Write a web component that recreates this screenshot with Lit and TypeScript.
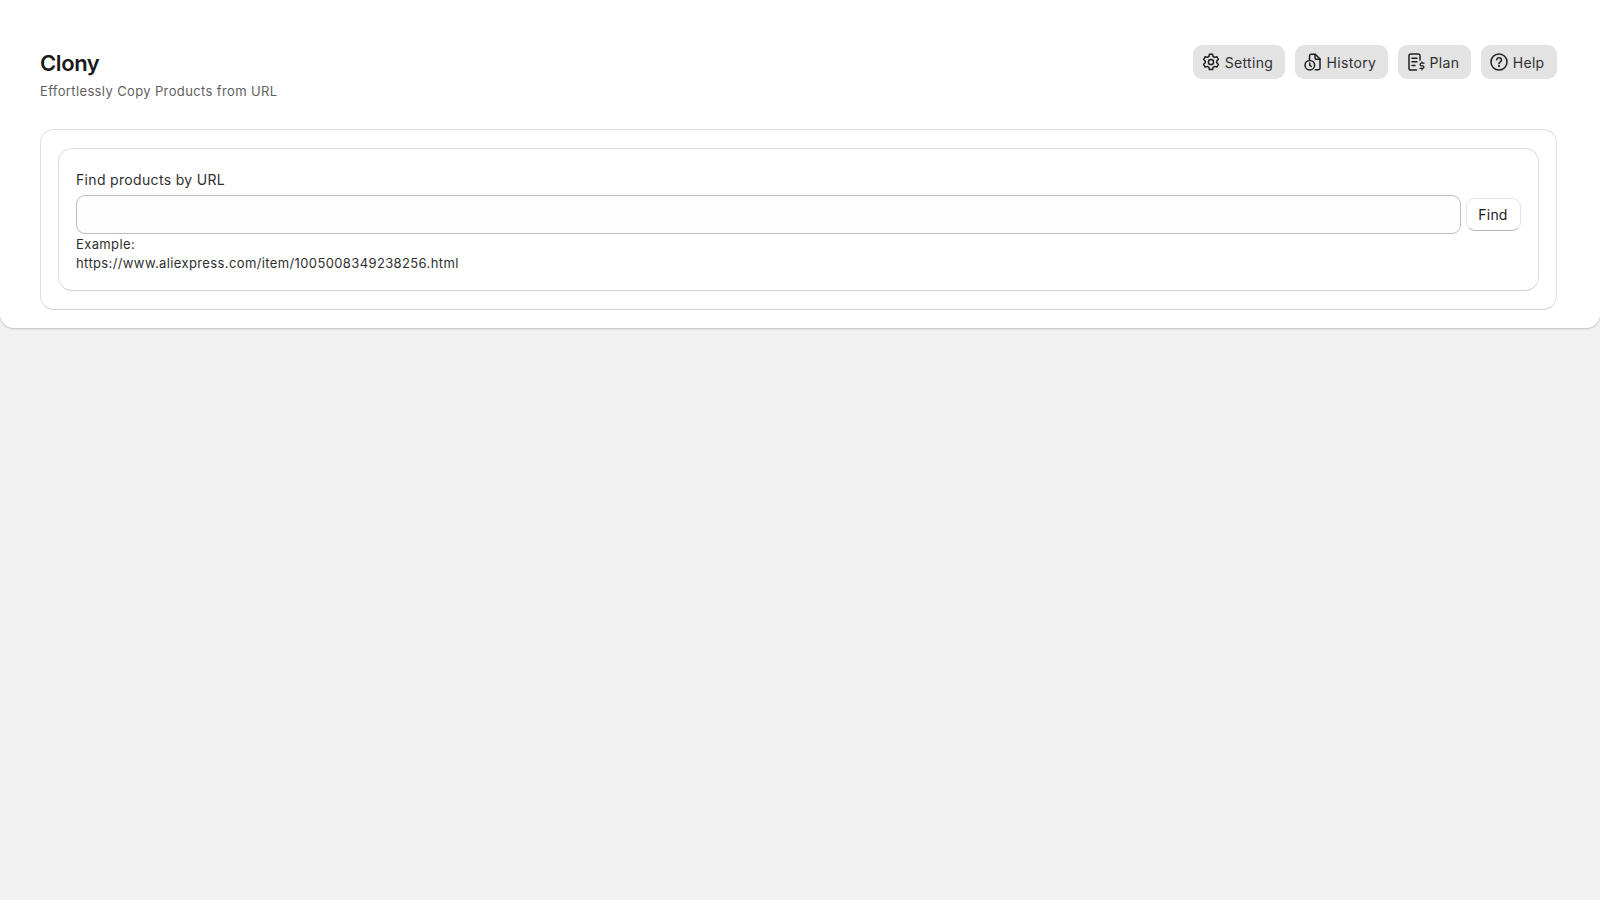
import { LitElement, html, css } from "lit";
import { customElement } from "lit/decorators.js";

const gear = html`<svg viewBox="0 0 20 20" fill="none" stroke="currentColor" stroke-width="1.5" stroke-linejoin="round"><circle cx="10" cy="10" r="2.6"/><path d="M8.4 2.3h3.2l.5 2.2 1.5.9 2.2-.7 1.6 2.8-1.7 1.5v1.8l1.7 1.5-1.6 2.8-2.2-.7-1.5.9-.5 2.2H8.4l-.5-2.2-1.5-.9-2.2.7-1.6-2.8 1.7-1.5V9l-1.7-1.5 1.6-2.8 2.2.7 1.5-.9z"/></svg>`;
const history = html`<svg viewBox="0 0 20 20" fill="none" stroke="currentColor" stroke-width="1.5" stroke-linecap="round" stroke-linejoin="round"><path d="M6.5 8V4a1.8 1.8 0 0 1 1.8-1.8h4L17 7v9a1.8 1.8 0 0 1-1.8 1.8h-3"/><path d="M12 2.5V6a1.3 1.3 0 0 0 1.3 1.3H17"/><circle cx="6.8" cy="13.2" r="4.8"/><path d="M6.8 11v2.4l1.4 1"/></svg>`;
const plan = html`<svg viewBox="0 0 20 20" fill="none" stroke="currentColor" stroke-width="1.5" stroke-linecap="round" stroke-linejoin="round"><path d="M10.5 18H4.8A1.8 1.8 0 0 1 3 16.2V3.8A1.8 1.8 0 0 1 4.8 2h7.4A1.8 1.8 0 0 1 14 3.8V8"/><path d="M6 6.2h5M6 9.8h5M6 13.4h3"/><path d="M18 11.2h-2.6a1.2 1.2 0 0 0 0 2.6h1.2a1.2 1.2 0 0 1 0 2.6H14M16 10v1.2M16 16.4v1.4" stroke-width="1.3"/></svg>`;
const help = html`<svg viewBox="0 0 20 20" fill="none" stroke="currentColor" stroke-width="1.5" stroke-linecap="round" stroke-linejoin="round"><circle cx="10" cy="10" r="8"/><path d="M7.6 7.8A2.4 2.4 0 0 1 10 5.8c1.4 0 2.5 1 2.5 2.2 0 1.9-2.5 1.9-2.5 3.7"/><circle cx="10" cy="14.2" r=".35" fill="currentColor"/></svg>`;

@customElement("app-root")
export class AppRoot extends LitElement {
  static styles = css`
    :host {
      display: block;
      min-height: 900px;
      background: #f1f1f1;
      font-family: Inter, "Liberation Sans", sans-serif;
      color: #303030;
    }
    .page {
      background: #fff;
      height: 328px;
      box-sizing: border-box;
      border-radius: 0 0 14px 14px;
      box-shadow: 0 1px 2px rgba(0, 0, 0, 0.22);
      padding: 45px 43.5px 0 40px;
    }
    .header {
      display: flex;
      justify-content: space-between;
      align-items: flex-start;
      height: 84px;
    }
    h1 {
      margin: 0;
      font-size: 22px;
      line-height: 36px;
      font-weight: 600;
      letter-spacing: -0.4px;
      color: #1a1a1a;
    }
    .sub {
      font-size: 13px;
      line-height: 20px;
      letter-spacing: 0.37px;
      color: #616161;
    }
    .actions {
      display: flex;
      gap: 9.5px;
    }
    .btn {
      display: flex;
      align-items: center;
      gap: 4px;
      height: 34px;
      padding: 0 12px 0 8px;
      border-radius: 9px;
      background: #e3e3e3;
      font-size: 14px;
      letter-spacing: 0.3px;
      color: #303030;
    }
    .btn svg {
      width: 20px;
      height: 20px;
      color: #1f1f1f;
    }
    .outer,
    .inner {
      border: 1px solid #dfdfdf;
      border-bottom-color: #d0d0d0;
      border-radius: 14px;
      box-sizing: border-box;
      background: #fff;
    }
    .outer {
      height: 181px;
      padding: 18px 17px;
    }
    .inner {
      height: 143px;
      padding: 21px 17px 0;
    }
    label {
      display: block;
      font-size: 14px;
      line-height: 20px;
      letter-spacing: 0.33px;
      color: #303030;
    }
    .row {
      display: flex;
      align-items: center;
      gap: 5px;
      margin-top: 5px;
    }
    .field {
      flex: 1;
      height: 39px;
      box-sizing: border-box;
      border: 1px solid #bdbdbd;
      border-radius: 9px;
      background: #fdfdfd;
      padding: 0 12px;
      outline: none;
      font: inherit;
    }
    .find {
      width: 55px;
      height: 33px;
      box-sizing: border-box;
      border: 1px solid #e3e3e3;
      border-bottom: 1.5px solid #b5b5b5;
      border-radius: 9px;
      background: #fff;
      font-family: inherit;
      font-size: 14px;
      letter-spacing: 0.2px;
      color: #1a1a1a;
      padding: 0;
    }
    .help {
      margin-top: 1px;
      font-size: 13px;
      line-height: 19px;
      letter-spacing: 0.38px;
      color: #303030;
    }
  `;

  render() {
    return html`
      <div class="page">
        <div class="header">
          <div>
            <h1>Clony</h1>
            <div class="sub">Effortlessly Copy Products from URL</div>
          </div>
          <div class="actions">
            <div class="btn">${gear}<span>Setting</span></div>
            <div class="btn">${history}<span>History</span></div>
            <div class="btn">${plan}<span>Plan</span></div>
            <div class="btn">${help}<span>Help</span></div>
          </div>
        </div>
        <div class="outer">
          <div class="inner">
            <label for="url">Find products by URL</label>
            <div class="row">
              <input id="url" class="field" type="text" />
              <button class="find">Find</button>
            </div>
            <div class="help">
              Example:<br />https://www.aliexpress.com/item/1005008349238256.html
            </div>
          </div>
        </div>
      </div>
    `;
  }
}
